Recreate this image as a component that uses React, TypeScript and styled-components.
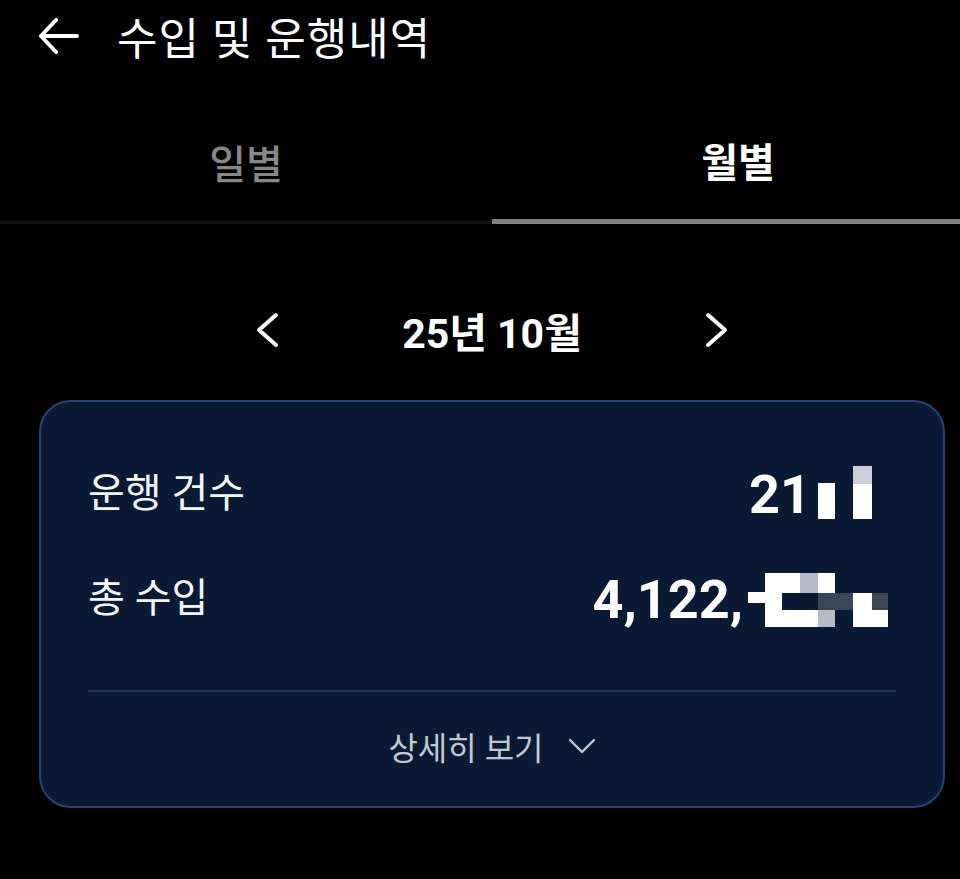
import React from "react";
import styled, { createGlobalStyle } from "styled-components";

const GlobalStyle = createGlobalStyle`
  html, body {
    margin: 0;
    padding: 0;
    background: #000;
    overflow: hidden;
  }
  body {
    font-family: "Roboto", "Noto Sans CJK KR", sans-serif;
    color: #fff;
  }
`;

const Page = styled.div`
  width: 984px;
  height: 879px;
  background: #000;
  display: flex;
  flex-direction: column;
`;

const Header = styled.header`
  height: 72px;
  display: flex;
  align-items: center;
  padding-left: 36px;
  gap: 37px;
`;

const Title = styled.h1`
  margin: 0;
  font-size: 44px;
  font-weight: 400;
  color: #fff;
  letter-spacing: 1px;
`;

const Tabs = styled.nav`
  margin-top: 28px;
  display: flex;
  align-items: flex-end;
`;

const Tab = styled.div<{ $active?: boolean }>`
  flex: 1;
  height: 124px;
  box-sizing: border-box;
  display: flex;
  align-items: center;
  justify-content: center;
  font-size: 40px;
  font-weight: ${(p) => (p.$active ? 700 : 500)};
  color: ${(p) => (p.$active ? "#ffffff" : "#878787")};
  border-bottom: ${(p) => (p.$active ? "5px solid #808080" : "3px solid #161616")};
  padding-top: ${(p) => (p.$active ? "0" : "2px")};
`;

const MonthNav = styled.div`
  margin-top: 66px;
  height: 80px;
  display: flex;
  align-items: center;
  justify-content: center;
`;

const NavButton = styled.button`
  width: 60px;
  height: 60px;
  background: none;
  border: none;
  padding: 0;
  display: flex;
  align-items: center;
  justify-content: center;
  cursor: pointer;
`;

const MonthLabel = styled.div`
  width: 390px;
  text-align: center;
  font-size: 41px;
  font-weight: 700;
  color: #fff;
`;

const Card = styled.section`
  margin: 30px 39px 0;
  height: 408px;
  box-sizing: border-box;
  border: 2px solid #2a4373;
  border-radius: 32px;
  background: #0b1a34;
  padding: 53px 55px 0 47px;
  display: flex;
  flex-direction: column;
`;

const Row = styled.div`
  height: 70px;
  display: flex;
  align-items: center;
  justify-content: space-between;
  & + & {
    margin-top: 35px;
  }
`;

const Label = styled.div`
  font-size: 40px;
  font-weight: 400;
  color: #f4f6f9;
`;

const Value = styled.div`
  display: flex;
  align-items: center;
  padding-top: 10px;
  font-size: 54px;
  font-weight: 700;
  color: #fff;
  line-height: 1;
`;

const Mosaic = styled.svg`
  display: block;
  flex-shrink: 0;
`;

const Divider = styled.hr`
  margin: 60px -8px 0 0;
  border: none;
  height: 2px;
  background: #1d3458;
`;

const Footer = styled.button`
  flex: 1;
  background: none;
  border: none;
  display: flex;
  align-items: center;
  justify-content: center;
  gap: 24px;
  font-family: inherit;
  font-size: 32px;
  color: #c2c8d1;
  padding: 0 0 6px 8px;
  cursor: pointer;
`;

const ArrowLeft = () => (
  <svg width="44" height="36" viewBox="0 0 44 36" fill="none">
    <path d="M41 18H5M20 2L5 18l15 16" stroke="#fff" strokeWidth="4" strokeLinecap="round" strokeLinejoin="round" />
  </svg>
);

const Chevron = ({ dir }: { dir: "left" | "right" }) => (
  <svg width="26" height="36" viewBox="0 0 26 36" fill="none">
    <path
      d={dir === "left" ? "M22 3L5 18l17 15" : "M4 3l17 15L4 33"}
      stroke="#fff"
      strokeWidth="4"
      strokeLinecap="round"
      strokeLinejoin="round"
    />
  </svg>
);

const ChevronDown = () => (
  <svg width="28" height="18" viewBox="0 0 28 18" fill="none">
    <path d="M2 3l12 12L26 3" stroke="#c2c8d1" strokeWidth="2.4" strokeLinecap="round" strokeLinejoin="round" />
  </svg>
);

type Cell = [number, number, number, number, string];

const countCells: Cell[] = [
  [7, 18, 17, 36, "#ffffff"],
  [42, 1, 19, 18, "#c9cfd8"],
  [42, 19, 19, 35, "#ffffff"],
];

const incomeCells: Cell[] = [
  [5, 22, 20, 11, "#ffffff"],
  [22, 3, 35, 20, "#ffffff"],
  [57, 3, 18, 20, "#b5bcc8"],
  [75, 3, 17, 20, "#ffffff"],
  [22, 23, 17, 17, "#ffffff"],
  [75, 23, 35, 17, "#3b4558"],
  [110, 23, 19, 17, "#ffffff"],
  [129, 23, 16, 17, "#3b4558"],
  [22, 40, 53, 17, "#ffffff"],
  [75, 40, 17, 17, "#b5bcc8"],
  [110, 40, 35, 17, "#ffffff"],
];

const MosaicBlock = ({ w, cells }: { w: number; cells: Cell[] }) => (
  <Mosaic width={w} height={60} viewBox={`0 0 ${w} 60`}>
    {cells.map(([x, y, cw, ch, c], i) => (
      <rect key={i} x={x} y={y} width={cw} height={ch} fill={c} />
    ))}
  </Mosaic>
);

export default function App() {
  return (
    <>
      <GlobalStyle />
      <Page>
        <Header>
          <ArrowLeft />
          <Title>수입 및 운행내역</Title>
        </Header>
        <Tabs>
          <Tab>일별</Tab>
          <Tab $active>월별</Tab>
        </Tabs>
        <MonthNav>
          <NavButton aria-label="이전 달">
            <Chevron dir="left" />
          </NavButton>
          <MonthLabel>25년 10월</MonthLabel>
          <NavButton aria-label="다음 달">
            <Chevron dir="right" />
          </NavButton>
        </MonthNav>
        <Card>
          <Row>
            <Label>운행 건수</Label>
            <Value>
              21
              <MosaicBlock w={77} cells={countCells} />
            </Value>
          </Row>
          <Row>
            <Label>총 수입</Label>
            <Value>
              4,122,
              <MosaicBlock w={145} cells={incomeCells} />
            </Value>
          </Row>
          <Divider />
          <Footer>
            상세히 보기
            <ChevronDown />
          </Footer>
        </Card>
      </Page>
    </>
  );
}
